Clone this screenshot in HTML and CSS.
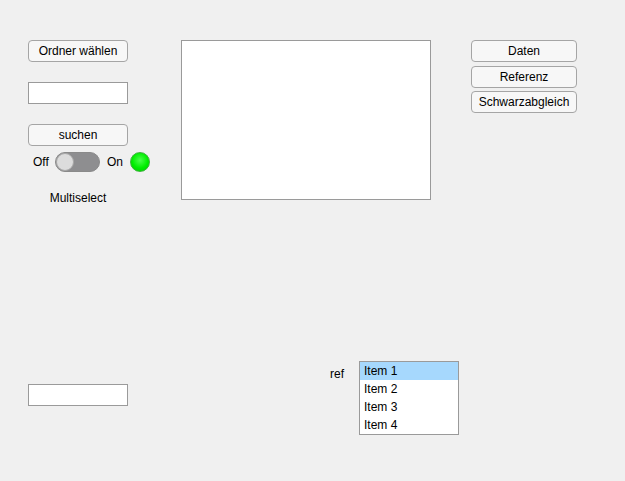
FILE: index.html
```html
<!DOCTYPE html>
<html>
<head>
<meta charset="utf-8">
<link rel="stylesheet" href="styles.css">
</head>
<body>
<div class="app">
  <div class="top">
    <div class="col-left">
      <button class="btn">Ordner wählen</button>
      <div class="edit gap20"></div>
      <button class="btn gap20">suchen</button>
      <div class="switch-row">
        <span class="sw-label off">Off</span>
        <span class="track"><span class="knob"></span></span>
        <span class="sw-label on">On</span>
        <span class="lamp"></span>
      </div>
      <div class="multi">Multiselect</div>
    </div>
    <div class="panel"></div>
    <div class="col-right">
      <button class="btn wide">Daten</button>
      <button class="btn wide g4">Referenz</button>
      <button class="btn wide g3">Schwarzabgleich</button>
    </div>
  </div>
  <div class="bottom">
    <div class="edit low"></div>
    <span class="ref">ref</span>
    <div class="listbox">
      <div class="item sel">Item 1</div>
      <div class="item">Item 2</div>
      <div class="item">Item 3</div>
      <div class="item">Item 4</div>
    </div>
  </div>
</div>
</body>
</html>
```

FILE: styles.css
```css
* { box-sizing: border-box; }
html, body {
  margin: 0;
  padding: 0;
  background: #f0f0f0;
  width: 625px;
  height: 481px;
  overflow: hidden;
  font-family: "Liberation Sans", Arial, sans-serif;
  font-size: 12px;
  color: #000;
}
.app {
  padding: 40px 0 0 28px;
}
.top {
  display: flex;
  align-items: flex-start;
  height: 160px;
}
.col-left {
  width: 100px;
  flex-shrink: 0;
  display: flex;
  flex-direction: column;
}
.btn {
  display: block;
  width: 100px;
  height: 22px;
  margin: 0;
  padding: 0;
  border: 1px solid #a5a5a5;
  border-radius: 4px;
  background: #f7f7f7;
  font-family: "Liberation Sans", Arial, sans-serif;
  font-size: 12px;
  color: #000;
  text-align: center;
  line-height: 20px;
}
.btn.wide { width: 106px; }
.g4 { margin-top: 4px; }
.g3 { margin-top: 3px; }
.gap20 { margin-top: 20px; }
.edit {
  width: 100px;
  height: 22px;
  flex-shrink: 0;
  background: #fff;
  border: 1px solid #9a9a9a;
}
.switch-row {
  display: flex;
  align-items: center;
  height: 20px;
  margin-top: 6px;
  width: 130px;
}
.switch-row > * { flex-shrink: 0; }
.sw-label { line-height: 14px; }
.off { margin-left: 5px; width: 16px; }
.track {
  display: block;
  position: relative;
  margin-left: 6px;
  width: 45px;
  height: 20px;
  border-radius: 10px;
  background: #8e8e90;
  border: 1px solid #8a8a8a;
}
.knob {
  position: absolute;
  left: 0;
  top: 0;
  width: 18px;
  height: 18px;
  border-radius: 50%;
  background: #dcdcdc;
  border: 1px solid #a8a8a8;
}
.on { margin-left: 7px; width: 17px; }
.lamp {
  display: block;
  margin-left: 6px;
  width: 20px;
  height: 20px;
  border-radius: 50%;
  background: radial-gradient(circle at 50% 40%, #4dff4d 0%, #00ee00 55%, #00c800 100%);
  border: 1px solid #3bb33b;
}
.multi {
  margin-top: 19px;
  text-align: center;
  line-height: 14px;
}
.panel {
  margin-left: 53px;
  width: 250px;
  height: 160px;
  flex-shrink: 0;
  background: #fff;
  border: 1px solid #9a9a9a;
}
.col-right {
  margin-left: 40px;
  display: flex;
  flex-direction: column;
}
.bottom {
  display: flex;
  align-items: flex-start;
  margin-top: 161px;
}
.edit.low { margin-top: 23px; }
.ref {
  margin-left: 202px;
  margin-top: 6px;
  width: 29px;
  line-height: 14px;
}
.listbox {
  width: 100px;
  height: 74px;
  background: #fff;
  border: 1px solid #9a9a9a;
}
.item {
  height: 18px;
  line-height: 18px;
  padding-left: 4px;
}
.item.sel { background: #a6d8fd; }
```
